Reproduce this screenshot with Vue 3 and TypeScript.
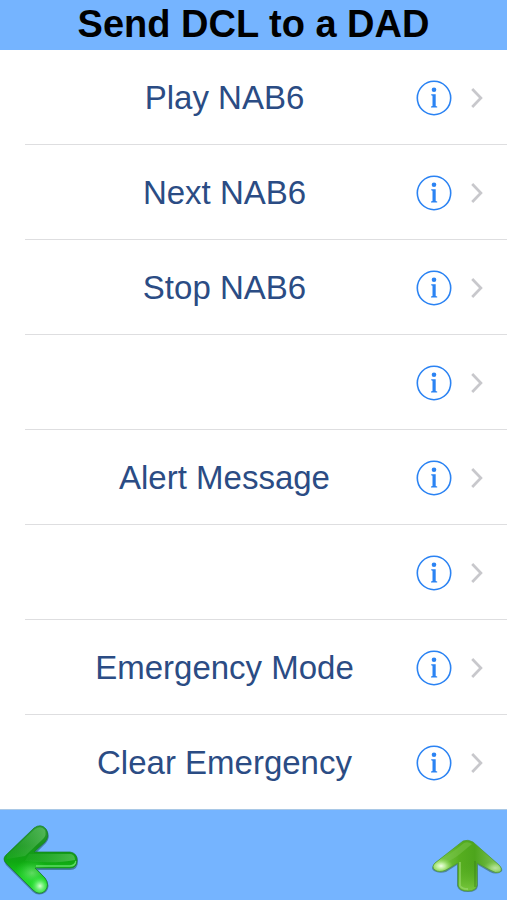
<script setup lang="ts">
interface Command {
  id: number
  label: string
}

const title = 'Send DCL to a DAD'

const commands: Command[] = [
  { id: 1, label: 'Play NAB6' },
  { id: 2, label: 'Next NAB6' },
  { id: 3, label: 'Stop NAB6' },
  { id: 4, label: '' },
  { id: 5, label: 'Alert Message' },
  { id: 6, label: '' },
  { id: 7, label: 'Emergency Mode' },
  { id: 8, label: 'Clear Emergency' },
]
</script>

<template>
  <div class="screen">
    <header class="bar">
      <h1 class="title">{{ title }}</h1>
    </header>

    <main>
      <ul class="list">
        <li v-for="command in commands" :key="command.id" class="row">
          <button type="button" class="label">{{ command.label }}</button>
          <button type="button" class="info" aria-label="Info">
            <svg viewBox="0 0 36 36" width="36" height="36" aria-hidden="true">
              <circle cx="18" cy="18" r="16.7" fill="none" stroke="#2b83f3" stroke-width="1.6" />
              <circle cx="18" cy="9.8" r="2.3" fill="#2b83f3" />
              <path d="M15.2 14.3h4.5v11.8l1.5.4v1h-6.2v-1l1.5-.4V15.7l-1.3-.4z" fill="#2b83f3" />
            </svg>
          </button>
          <svg class="chevron" viewBox="0 0 12 22" width="12" height="22" aria-hidden="true">
            <path d="M1.2 2l8.7 9-8.7 9" fill="none" stroke="#c8c8cc" stroke-width="2.7" />
          </svg>
        </li>
      </ul>
    </main>

    <footer class="toolbar">
      <button type="button" class="tool" aria-label="Back">
        <svg viewBox="0 0 92 90" width="92" height="90" aria-hidden="true">
          <defs>
            <linearGradient id="back-body" x1="0" y1="0" x2="0" y2="1">
              <stop offset=".15" stop-color="#2f9c38" />
              <stop offset=".4" stop-color="#16921b" />
              <stop offset=".58" stop-color="#10a812" />
              <stop offset=".8" stop-color="#19d421" />
              <stop offset="1" stop-color="#4cde58" />
            </linearGradient>
            <linearGradient id="back-gloss" x1="0" y1="0" x2="1" y2="0">
              <stop offset="0" stop-color="#42b947" stop-opacity=".15" />
              <stop offset="1" stop-color="#7bd27e" stop-opacity=".5" />
            </linearGradient>
            <radialGradient id="back-glow">
              <stop offset="0" stop-color="#d4ffcf" />
              <stop offset=".4" stop-color="#7bf382" stop-opacity=".8" />
              <stop offset="1" stop-color="#30e83a" stop-opacity="0" />
            </radialGradient>
            <clipPath id="back-clip">
              <path d="M4 49Q4 47 6 45L34 18Q41 13 46 19Q50 26 45 32L34 42H70Q77 43 77 50Q77 58 70 58H35L45 68Q50 75 45 81Q39 86 33 80L6 53Q4 51 4 49Z" />
            </clipPath>
          </defs>
          <path
            d="M4 50Q4 48 6 46L34 19Q41 14 47 20Q51 27 46 33L36 43H71Q78 44 78 51Q78 60 70 60H38L46 69Q51 76 46 82Q39 87 33 82L6 55Q4 52 4 50Z"
            fill="#245b66" opacity=".6"
          />
          <g clip-path="url(#back-clip)">
            <rect width="92" height="90" fill="url(#back-body)" />
            <path d="M7 45L35 19Q41 15 45 20Q47 25 43 29L25 46L7 49Z" fill="url(#back-gloss)" />
            <path d="M29 44H71Q75 45 75 50Q54 54 25 51Z" fill="url(#back-gloss)" />
            <ellipse cx="32" cy="63" rx="18" ry="14" fill="url(#back-glow)" opacity=".4" />
            <circle cx="40" cy="76" r="10" fill="url(#back-glow)" />
            <path d="M36 56H70Q75 56 76 51" fill="none" stroke="#6fe377" stroke-width="1.5" opacity=".8" />
          </g>
          <path
            d="M4 49Q4 47 6 45L34 18Q41 13 46 19Q50 26 45 32L34 42H70Q77 43 77 50Q77 58 70 58H35L45 68Q50 75 45 81Q39 86 33 80L6 53Q4 51 4 49Z"
            fill="none" stroke="#15801f" stroke-width="1" opacity=".7"
          />
        </svg>
      </button>
      <button type="button" class="tool" aria-label="Up">
        <svg viewBox="0 0 92 90" width="92" height="90" aria-hidden="true">
          <defs>
            <linearGradient id="up-body" x1="0" y1="0" x2="1" y2="0">
              <stop offset=".18" stop-color="#8ad65a" />
              <stop offset=".48" stop-color="#57ae20" />
              <stop offset=".65" stop-color="#4da51c" />
              <stop offset=".95" stop-color="#88c864" />
            </linearGradient>
            <linearGradient id="up-stem" x1="0" y1="0" x2="0" y2="1">
              <stop offset="0" stop-color="#4da61a" stop-opacity="0" />
              <stop offset="1" stop-color="#7ccb40" />
            </linearGradient>
            <radialGradient id="up-glow">
              <stop offset="0" stop-color="#f3ffe9" />
              <stop offset=".35" stop-color="#caf5ab" stop-opacity=".85" />
              <stop offset="1" stop-color="#91df55" stop-opacity="0" />
            </radialGradient>
            <clipPath id="up-clip">
              <path d="M48 31Q53 29 58 32L84 55Q88 59 85 62Q81 64 75 60L62 53V75Q61 81 53 81Q44 81 43 75V53L31 60Q24 63 20 60Q16 57 20 53Z" />
            </clipPath>
          </defs>
          <path
            d="M48 32Q53 30 58 33L85 56Q89 60 86 62Q81 65 75 62L63 55V76Q62 82 53 82Q44 82 42 76V55L31 62Q24 64 19 61Q15 58 20 53Z"
            fill="#35655a" opacity=".6"
          />
          <g clip-path="url(#up-clip)">
            <rect width="92" height="90" fill="url(#up-body)" />
            <path d="M43 50H62V82H43Z" fill="url(#up-stem)" />
            <path d="M22 54L49 33Q53 31 57 34L45 44Q39 49 28 54Z" fill="#79c44b" opacity=".5" />
            <path d="M45 52V76Q47 79 53 79" fill="none" stroke="#9bd972" stroke-width="2" opacity=".6" />
            <path d="M60 51V77" stroke="#397f1c" stroke-width="2" opacity=".4" />
            <ellipse cx="26" cy="56" rx="12" ry="8" fill="url(#up-glow)" />
            <ellipse cx="80" cy="58" rx="12" ry="7" fill="url(#up-glow)" opacity=".55" />
          </g>
          <path
            d="M48 31Q53 29 58 32L84 55Q88 59 85 62Q81 64 75 60L62 53V75Q61 81 53 81Q44 81 43 75V53L31 60Q24 63 20 60Q16 57 20 53Z"
            fill="none" stroke="#4b9a2c" stroke-width="1" opacity=".7"
          />
        </svg>
      </button>
    </footer>
  </div>
</template>

<style>
body {
  margin: 0;
  background: #ffffff;
}
</style>

<style scoped>
.screen {
  display: flex;
  flex-direction: column;
  min-height: 100vh;
  font-family: "Liberation Sans", Arial, sans-serif;
}

.bar {
  height: 50px;
  background: #75b4ff;
}

.title {
  margin: 0;
  font-size: 38px;
  line-height: 48px;
  font-weight: 700;
  text-align: center;
  color: #000000;
}

main {
  flex: 1;
}

.list {
  margin: 0;
  padding: 0;
  list-style: none;
}

.row {
  display: flex;
  align-items: center;
  box-sizing: border-box;
  height: 95px;
  margin-left: 25px;
  padding: 2px 24px 0 0;
  border-bottom: 1px solid #dedee0;
}

.row:last-child {
  height: 94px;
  border-bottom: 0;
}

button {
  margin: 0;
  padding: 0;
  border: 0;
  background: none;
  font: inherit;
  cursor: pointer;
}

.label {
  flex: 1;
  align-self: stretch;
  padding-left: 8px;
  font-size: 33px;
  line-height: 40px;
  text-align: center;
  color: #2b4c84;
}

.info {
  width: 36px;
  height: 36px;
}

.info svg,
.tool svg,
.chevron {
  display: block;
}

.chevron {
  margin-left: 19px;
}

.toolbar {
  display: flex;
  justify-content: space-between;
  border-top: 1px solid #a9c8e6;
  background: #75b4ff;
}
</style>
